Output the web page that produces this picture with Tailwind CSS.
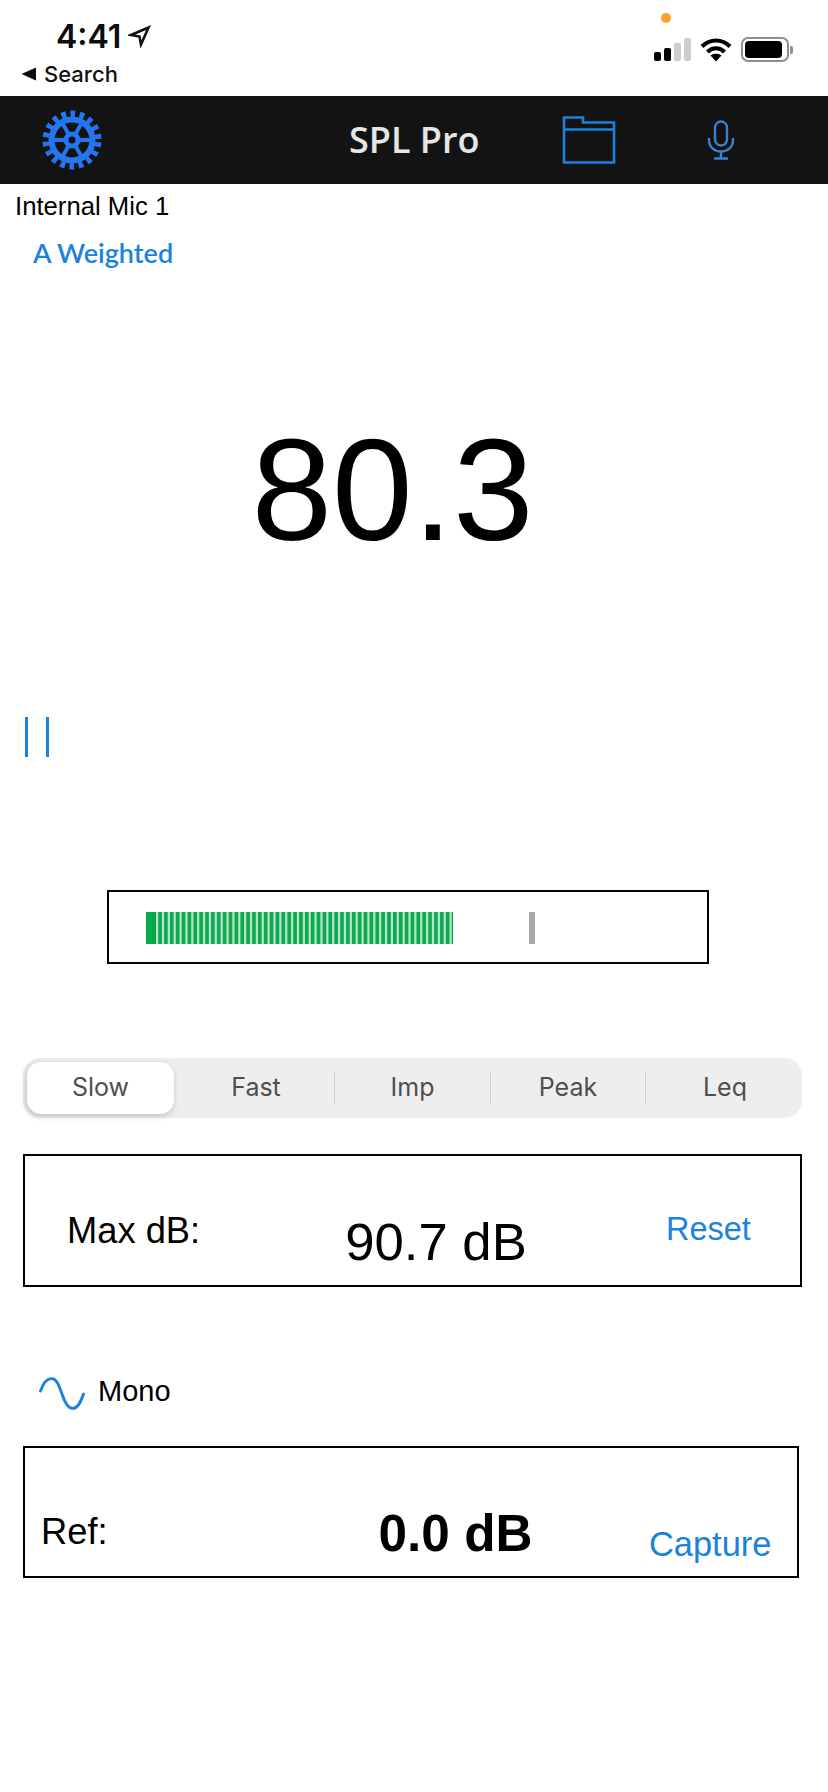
<!DOCTYPE html>
<html>
<head>
<meta charset="utf-8">
<script src="https://cdn.jsdelivr.net/npm/@tailwindcss/browser@4"></script>
</head>
<body class="bg-white font-['Liberation_Sans',sans-serif] text-black">
<div class="w-[828px] h-[1792px] overflow-hidden relative">
  <!-- status bar -->
  <div class="h-[96px] flex justify-between">
    <div class="pl-[21px] flex flex-col">
      <div class="flex items-center pl-[35px] pt-[19px] h-[54px]">
        <span class="font-['Inter',sans-serif] font-semibold text-[32px] leading-[36px] text-[#0c0c0c]">4:41</span>
        <svg class="ml-[7px] mt-[-2px]" width="24" height="24" viewBox="0 0 24 24" fill="none" stroke="#111" stroke-width="2.6" stroke-linejoin="miter"><path d="M3 11 L20.5 3.5 L13 20.5 L11.5 12.5 Z"/></svg>
      </div>
      <div class="flex items-center mt-[5px] h-[30px]">
        <svg width="16" height="14" viewBox="0 0 16 14"><path d="M0.5 7 L15 0.5 V13.5 Z" fill="#0c0c0c"/></svg>
        <span class="ml-[7px] font-['Inter',sans-serif] font-medium text-[22px] leading-[26px] text-[#111]">Search</span>
      </div>
    </div>
    <div class="pr-[35px] flex flex-col items-end">
      <div class="w-[10px] h-[10px] rounded-full bg-[#ff9f2e] mt-[13px] mr-[122px]"></div>
      <div class="flex items-center mt-[14px]">
        <div class="flex items-end gap-[3px] h-[23px]">
          <div class="w-[7px] h-[9px] rounded-[2px] bg-black"></div>
          <div class="w-[7px] h-[13px] rounded-[2px] bg-black"></div>
          <div class="w-[7px] h-[18px] rounded-[2px] bg-[#cdcdcd]"></div>
          <div class="w-[7px] h-[23px] rounded-[2px] bg-[#cdcdcd]"></div>
        </div>
        <svg class="ml-[9px]" width="32" height="24" viewBox="0 0 32 24" fill="none"><path d="M2 8.5 C10 0.5 22 0.5 30 8.5" stroke="#000" stroke-width="4.2"/><path d="M7.5 14 C12.5 9 19.500 9 24.500 14" stroke="#000" stroke-width="4.2"/><path d="M16 23.500 L10.500 17.500 C13.500 15 18.500 15 21.500 17.500 Z" fill="#000"/></svg>
        <div class="ml-[9px] w-[48px] h-[25px] rounded-[7px] border-2 border-[#8e8e8e] p-[2px]"><div class="w-[37px] h-full rounded-[4px] bg-black"></div></div>
        <div class="ml-[1px] w-[3px] h-[8px] rounded-r-[2px] bg-[#8e8e8e]"></div>
      </div>
    </div>
  </div>

  <!-- nav bar -->
  <div class="h-[88px] bg-[#131313] flex items-center relative">
    <svg class="ml-[42px]" width="60" height="60" viewBox="0 0 60 60" fill="none" stroke="#2476f0">
      <circle cx="30" cy="30" r="26" stroke-width="7" stroke-dasharray="4.6 4.476" stroke-dashoffset="-2.238"/>
      <circle cx="30" cy="30" r="20.500" stroke-width="6"/>
      <path d="M9 30H51M19.500 11.800L40.500 48.200M19.500 48.200L40.500 11.800" stroke-width="4"/>
      <circle cx="30" cy="30" r="6" fill="#131313" stroke-width="5"/>
    </svg>
    <span class="absolute left-[349px] top-[22px] font-['Open_Sans',sans-serif] font-semibold text-[36px] leading-[44px] text-[#e6e6e6]">SPL Pro</span>
    <svg class="ml-[460px]" width="54" height="50" viewBox="0 0 54 50" fill="none" stroke="#1b83dd" stroke-width="2.600"><path d="M2 2.500H21V7.500H52V47.500H2Z"/><path d="M2 14.500H52"/></svg>
    <svg class="ml-[91px]" width="28" height="40" viewBox="0 0 28 40" fill="none" stroke="#3a7fd0" stroke-width="2.400"><rect x="8" y="1.500" width="12" height="24" rx="6"/><path d="M2 18V20C2 27 7 31.500 14 31.500C21 31.500 26 27 26 20V18M14 31.500V38M7 38.500H21"/></svg>
  </div>

  <div class="pl-[15px] pt-[7px] text-[25.700px] leading-[31px] text-black">Internal Mic 1</div>
  <div class="pl-[33px] mt-[14px] font-['Lato',sans-serif] font-semibold text-[27px] leading-[33px] text-[#1b83dd]">A Weighted</div>

  <!-- reading -->
  <div class="mt-[156px] h-[130px] flex justify-center items-center pr-[43px]">
    <span class="text-[145px] leading-[130px]">80.3</span>
  </div>

  <!-- pause -->
  <div class="mt-[162px] ml-[25px] flex gap-[18px]">
    <div class="w-[3px] h-[40px] bg-[#1b83dd]"></div>
    <div class="w-[3px] h-[40px] bg-[#1b83dd]"></div>
  </div>

  <!-- meter -->
  <div class="mt-[133px] ml-[107px] w-[602px] h-[74px] border-2 border-black pl-[37px] pt-[20px] flex">
    <div class="w-[10px] h-[32px] bg-[#08a94a]"></div>
    <div class="w-[297px] h-[32px] bg-[repeating-linear-gradient(90deg,#5fc68a_0,#b5e4c9_0.5px,#b5e4c9_1.7px,#0fa94f_2.7px,#0fa94f_5.37px,#5fc68a_5.87px)]"></div>
    <div class="ml-[76px] w-[6px] h-[32px] bg-[#a8a8a8]"></div>
  </div>

  <!-- segmented -->
  <div class="mt-[94px] ml-[23px] w-[779px] h-[60px] rounded-[17px] bg-[#eeeeee] relative flex items-center text-[25px] font-['Inter',sans-serif] text-[#4f4f4f] p-[4px]">
    <div class="w-[148px] h-[52px] rounded-[14px] bg-white shadow-[-1px_2px_6px_rgba(0,0,0,0.22)] flex items-center justify-center">Slow</div>
    <div class="w-[161px] flex justify-center pl-[4px]">Fast</div>
    <div class="w-px h-[32px] bg-[#cfcfcf]"></div>
    <div class="w-[156px] flex justify-center">Imp</div>
    <div class="w-px h-[32px] bg-[#cfcfcf]"></div>
    <div class="w-[155px] flex justify-center">Peak</div>
    <div class="w-px h-[32px] bg-[#cfcfcf]"></div>
    <div class="w-[153px] flex justify-center pl-[6px]">Leq</div>
  </div>

  <!-- max -->
  <div class="mt-[36px] ml-[23px] w-[779px] h-[133px] border-2 border-black flex items-start relative">
    <span class="ml-[42px] mt-[53px] text-[36.300px] leading-[44px]">Max dB:</span>
    <span class="ml-[145px] mt-[54px] text-[52.700px] leading-[64px]">90.7 dB</span>
    <span class="absolute left-[641px] top-[51px] text-[32.500px] leading-[44px] text-[#1b83dd]">Reset</span>
  </div>

  <!-- mono -->
  <div class="mt-[84px] ml-[39px] flex items-center h-[40px]">
    <svg class="mt-[6px]" width="46" height="36" viewBox="0 0 48 36" fill="none" stroke="#1b83dd" stroke-width="3" stroke-linecap="round"><path d="M1.500 15C5 5 9 2 13 2C19 2 21 10 24 18C27 27 30 33 35 33C40 33 43 28 46.500 18"/></svg>
    <span class="ml-[13px] text-[29px] leading-[34px]">Mono</span>
  </div>

  <!-- ref -->
  <div class="mt-[35px] ml-[23px] w-[776px] h-[132px] border-2 border-black flex items-start relative">
    <span class="ml-[16px] mt-[62px] text-[36.300px] leading-[44px]">Ref:</span>
    <span class="ml-[271px] mt-[54px] font-bold text-[51.300px] leading-[64px]">0.0 dB</span>
    <span class="absolute left-[624px] top-[74px] text-[34.400px] leading-[44px] text-[#1b83dd]">Capture</span>
  </div>
</div>
</body>
</html>
